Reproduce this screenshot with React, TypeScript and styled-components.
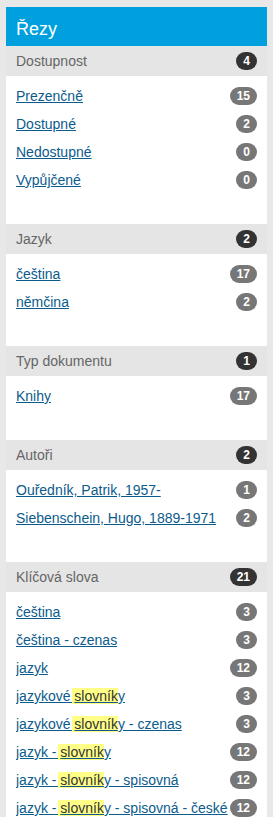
import styled, { createGlobalStyle } from "styled-components";

const GlobalStyle = createGlobalStyle`
  body {
    margin: 0;
    background: #e8e8e8;
    font-family: "Liberation Sans", Arial, sans-serif;
  }
`;

const Panel = styled.div`
  margin: 7px 6px 0;
  background: #fff;
`;

const Title = styled.div`
  height: 39px;
  box-sizing: border-box;
  padding: 5px 10px 0;
  line-height: 34px;
  background: #00a0de;
  color: #fff;
  font-size: 18px;
`;

const SectionHeader = styled.div`
  display: flex;
  align-items: center;
  justify-content: space-between;
  height: 30px;
  padding: 0 10px;
  background: #e5e5e5;
  color: #666;
  font-size: 14px;
`;

const List = styled.div`
  padding: 6px 10px 30px;
`;

const Item = styled.div`
  display: flex;
  align-items: center;
  height: 28px;
  font-size: 14px;
`;

const ItemLink = styled.a`
  flex: 1;
  min-width: 0;
  white-space: nowrap;
  overflow: hidden;
  color: #0b5b8c;
  text-decoration: underline;
  line-height: 20px;
`;

const Mark = styled.span`
  background: #ffff88;
  color: #333;
  padding: 0 0 0 2px;
  margin-left: -2px;
`;

const Badge = styled.span<{ $dark?: boolean }>`
  flex-shrink: 0;
  display: inline-block;
  min-width: 7px;
  padding: 3px 7px;
  border-radius: 10px;
  background: ${(p) => (p.$dark ? "#333" : "#777")};
  color: #fff;
  font-size: 12px;
  font-weight: bold;
  line-height: 12px;
  text-align: center;
`;

type Entry = { label: string; count: number; hl?: [string, string, string] };
type Section = { title: string; count: number; items: Entry[] };

const sections: Section[] = [
  {
    title: "Dostupnost",
    count: 4,
    items: [
      { label: "Prezenčně", count: 15 },
      { label: "Dostupné", count: 2 },
      { label: "Nedostupné", count: 0 },
      { label: "Vypůjčené", count: 0 },
    ],
  },
  {
    title: "Jazyk",
    count: 2,
    items: [
      { label: "čeština", count: 17 },
      { label: "němčina", count: 2 },
    ],
  },
  {
    title: "Typ dokumentu",
    count: 1,
    items: [{ label: "Knihy", count: 17 }],
  },
  {
    title: "Autoři",
    count: 2,
    items: [
      { label: "Ouředník, Patrik, 1957-", count: 1 },
      { label: "Siebenschein, Hugo, 1889-1971", count: 2 },
    ],
  },
  {
    title: "Klíčová slova",
    count: 21,
    items: [
      { label: "čeština", count: 3 },
      { label: "čeština - czenas", count: 3 },
      { label: "jazyk", count: 12 },
      { label: "", count: 3, hl: ["jazykové ", "slovník", "y"] },
      { label: "", count: 3, hl: ["jazykové ", "slovník", "y - czenas"] },
      { label: "", count: 12, hl: ["jazyk - ", "slovník", "y"] },
      { label: "", count: 12, hl: ["jazyk - ", "slovník", "y - spisovná"] },
      { label: "", count: 12, hl: ["jazyk - ", "slovník", "y - spisovná - české"] },
    ],
  },
];

const App = () => (
  <>
    <GlobalStyle />
    <Panel>
      <Title>Řezy</Title>
      {sections.map((s) => (
        <div key={s.title}>
          <SectionHeader>
            <span>{s.title}</span>
            <Badge $dark>{s.count}</Badge>
          </SectionHeader>
          <List>
            {s.items.map((it, i) => (
              <Item key={i}>
                <ItemLink href="#">
                  {it.hl ? (
                    <>
                      {it.hl[0]}
                      <Mark>{it.hl[1]}</Mark>
                      {it.hl[2]}
                    </>
                  ) : (
                    it.label
                  )}
                </ItemLink>
                <Badge>{it.count}</Badge>
              </Item>
            ))}
          </List>
        </div>
      ))}
    </Panel>
  </>
);

export default App;
